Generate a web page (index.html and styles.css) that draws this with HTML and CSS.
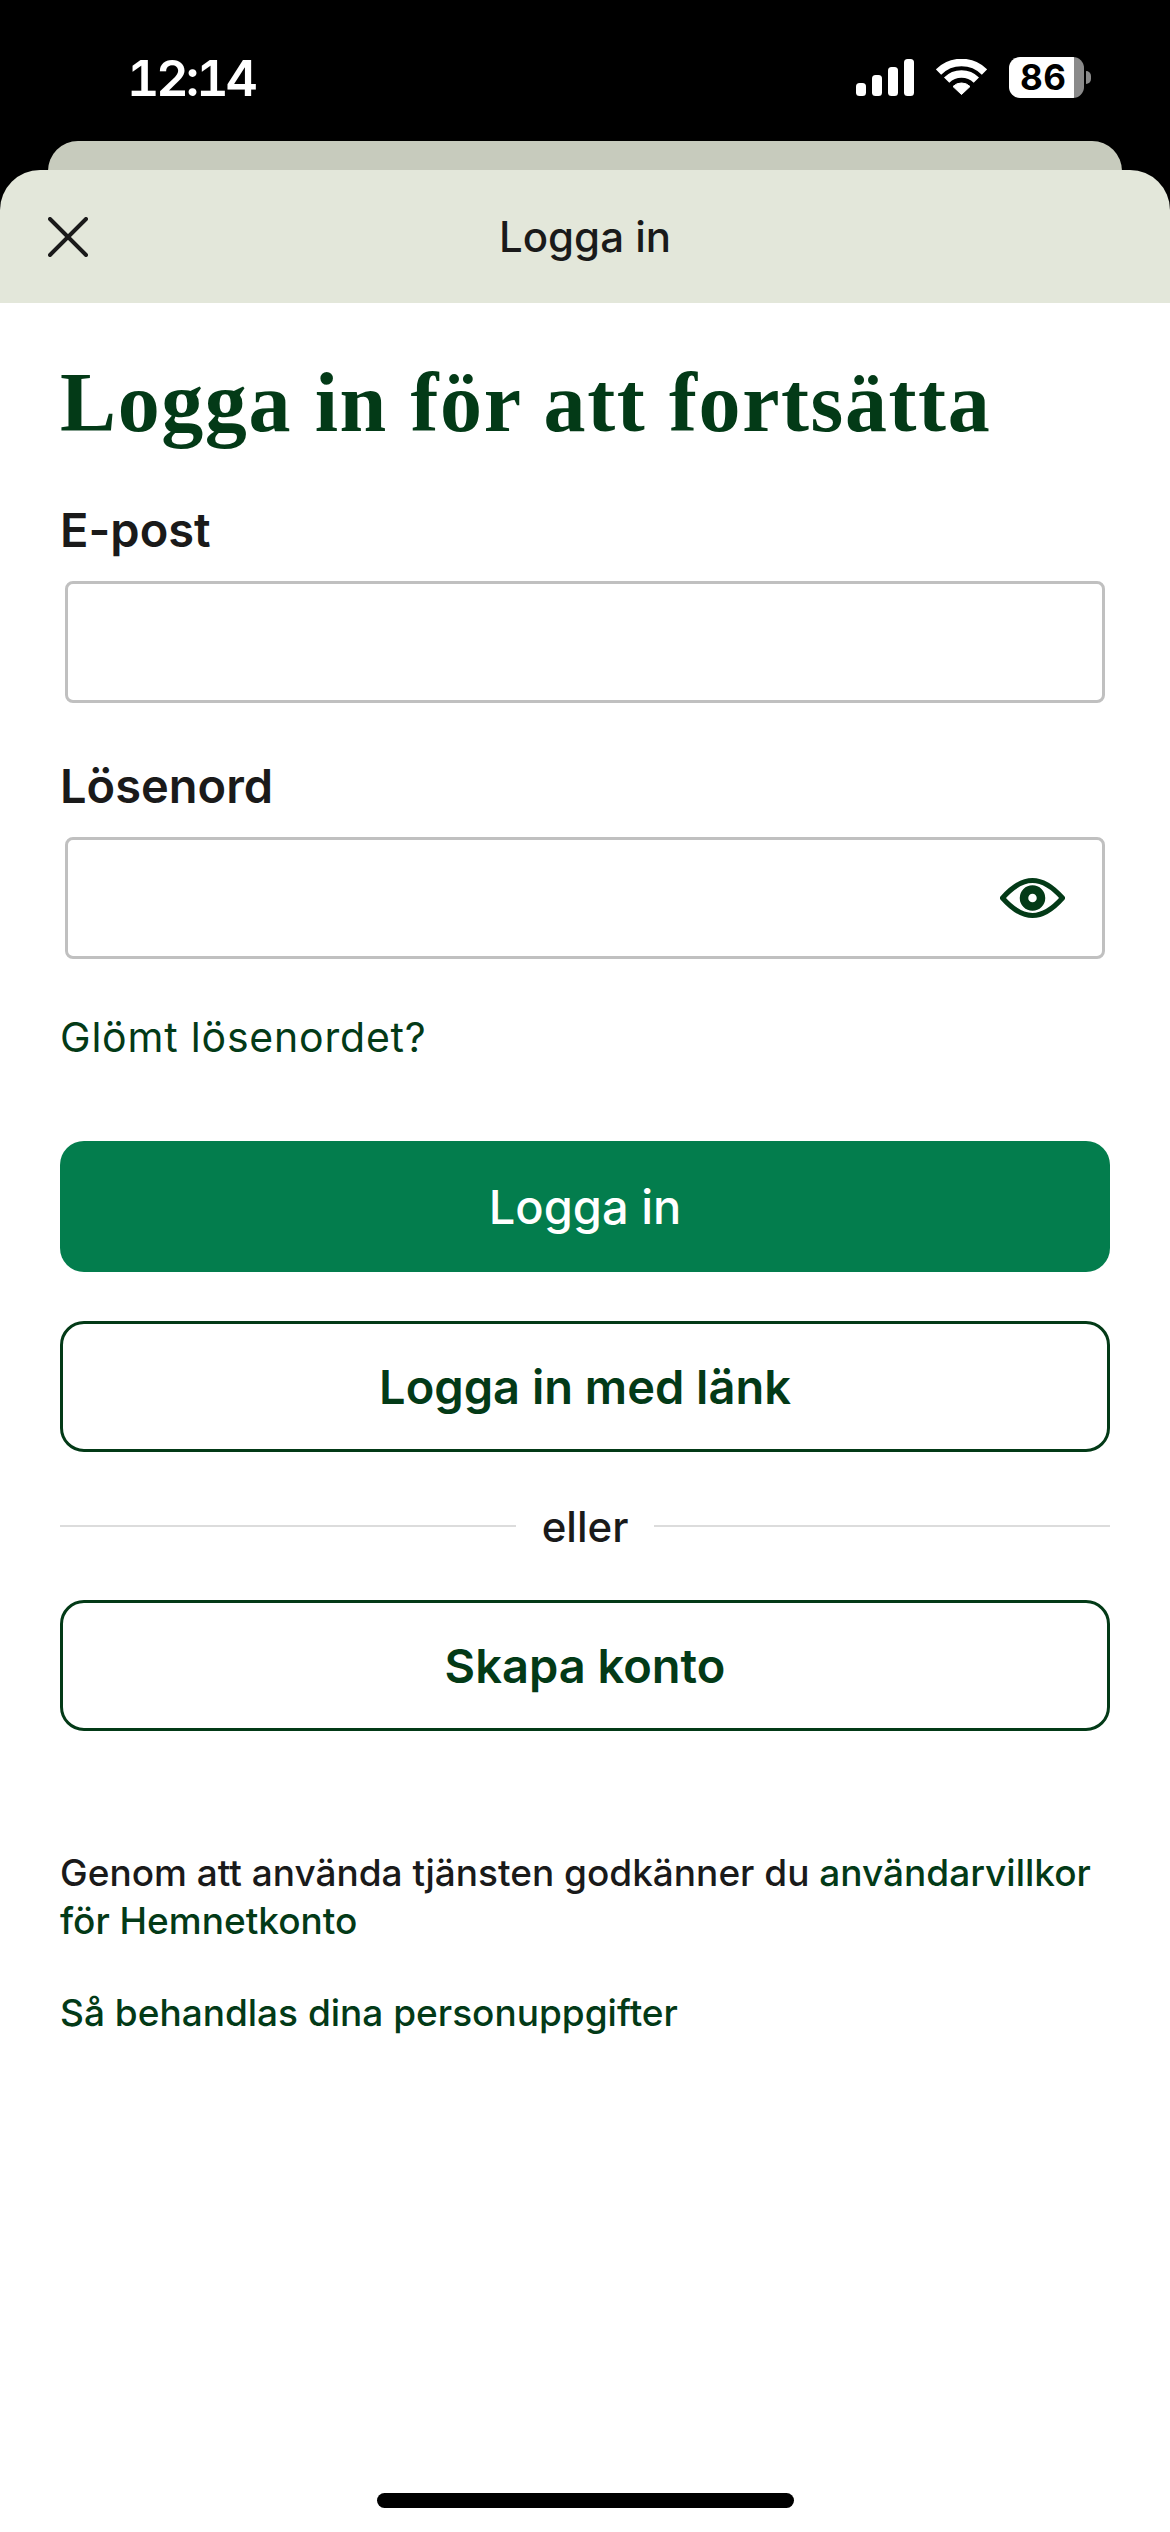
FILE: index.html
```html
<!DOCTYPE html>
<html lang="sv">
<head>
<meta charset="utf-8">
<title>Logga in</title>
<link rel="stylesheet" href="styles.css">
</head>
<body>
<div class="statusbar">
  <span class="time">12:14</span>
  <div class="status-icons">
    <svg class="signal" width="58" height="37" viewBox="0 0 58 37"><rect x="0" y="24" width="10" height="13" rx="3.5"/><rect x="16" y="16" width="10" height="21" rx="3.5"/><rect x="32" y="8" width="10" height="29" rx="3.5"/><rect x="48" y="0" width="10" height="37" rx="3.5"/></svg>
    <svg class="wifi" width="51" height="37" viewBox="0 0 51 37"><path class="wifi-arc" d="M2.5 13A32.5 32.5 0 0 1 48.5 13"/><path class="wifi-arc" d="M10.65 21.15A21 21 0 0 1 40.35 21.15"/><path class="wifi-dot" d="M25.5 35.5L17 27.5A12 12 0 0 1 34 27.5Z"/></svg>
    <div class="battery"><div class="battery-body">86</div><div class="battery-cap"></div></div>
  </div>
</div>
<div class="back-sheet"></div>
<header class="sheet-head">
  <svg class="close" width="40" height="40" viewBox="0 0 40 40"><path d="M2 2L38 38M38 2L2 38"/></svg>
  <span class="sheet-title">Logga in</span>
</header>
<main class="content">
  <h1 class="heading">Logga in för att fortsätta</h1>
  <label class="label label-first" for="email">E-post</label>
  <div class="field"><input id="email" class="input" type="text"></div>
  <label class="label label-second" for="pw">Lösenord</label>
  <div class="field">
    <input id="pw" class="input" type="password">
    <svg class="eye" width="65" height="40" viewBox="0 0 65 40"><path class="eye-line" d="M2.5 20C14 7 24 2.5 32.5 2.5S51 7 62.5 20C51 33 41 37.5 32.5 37.5S14 33 2.5 20Z"/><circle class="eye-pupil" cx="32.5" cy="20" r="8.5"/></svg>
  </div>
  <a class="forgot">Glömt lösenordet?</a>
  <button class="btn btn-primary">Logga in</button>
  <button class="btn btn-outline btn-link">Logga in med länk</button>
  <div class="divider"><span class="divider-text">eller</span></div>
  <button class="btn btn-outline">Skapa konto</button>
  <p class="terms">Genom att använda tjänsten godkänner du <a class="link">användarvillkor för Hemnetkonto</a></p>
  <p class="privacy"><a class="link">Så behandlas dina personuppgifter</a></p>
</main>
<div class="home-wrap"><div class="home-indicator"></div></div>
</body>
</html>
```
FILE: styles.css
```css
* { box-sizing: border-box; }
html, body { margin: 0; padding: 0; }
body {
  width: 1170px;
  height: 2532px;
  background: #000;
  font-family: Inter, "Liberation Sans", sans-serif;
  color: #1a1a1a;
  display: flex;
  flex-direction: column;
  overflow: hidden;
}
.statusbar {
  height: 141px;
  padding: 57px 79px 0 127px;
  display: flex;
  justify-content: space-between;
  align-items: flex-start;
  color: #fff;
}
.time { font-size: 50px; font-weight: 600; line-height: 42px; font-feature-settings: "tnum"; letter-spacing: -3px; }
.status-icons { display: flex; align-items: flex-start; }
.signal { fill: #fff; margin: 2px 22px 0 0; }
.wifi { margin: 2px 22px 0 0; }
.wifi-arc { fill: none; stroke: #fff; stroke-width: 7.5; }
.wifi-dot { fill: #fff; stroke: #fff; stroke-width: 1; stroke-linejoin: round; }
.battery { display: flex; align-items: center; }
.battery-body {
  width: 75px;
  height: 41px;
  border-radius: 11px;
  background: linear-gradient(90deg, #fff 0 65px, #8a8a8a 65px);
  color: #000;
  font-size: 35px;
  font-weight: 700;
  line-height: 41px;
  padding-left: 11px;
  letter-spacing: .5px;
}
.battery-cap { width: 5px; height: 13px; margin-left: 2px; background: #8a8a8a; border-radius: 0 6px 6px 0; }
.back-sheet {
  height: 60px;
  margin: 0 48px -31px;
  background: #c7cbbd;
  border-radius: 30px 30px 0 0;
}
.sheet-head {
  position: relative;
  height: 133px;
  background: #e3e7da;
  border-radius: 40px 40px 0 0;
  display: flex;
  align-items: center;
  justify-content: center;
  flex: none;
}
.close { position: absolute; left: 48px; top: 47px; fill: none; stroke: #1a1a1a; stroke-width: 4; stroke-linecap: round; }
.sheet-title { font-size: 42px; font-weight: 500; }
.content {
  flex: 1;
  background: #fff;
  padding: 54px 60px 0;
  display: flex;
  flex-direction: column;
}
.heading {
  margin: 0;
  font-family: "Liberation Serif", serif;
  font-size: 84px;
  line-height: 92px;
  font-weight: 700;
  letter-spacing: 1.6px;
  color: #033a17;
  white-space: nowrap;
}
.label { display: block; font-size: 47px; font-weight: 600; line-height: 56px; }
.label-first { margin-top: 53px; }
.label-second { margin-top: 55px; }
.field { position: relative; margin: 23px 5px 0; height: 122px; }
.input {
  display: block;
  width: 100%;
  height: 100%;
  border: 3px solid #c0c0c0;
  border-radius: 8px;
  background: #fff;
  outline: 0;
}
.eye { position: absolute; right: 40px; top: 41px; }
.eye-line { fill: none; stroke: #033a17; stroke-width: 5; stroke-linejoin: round; }
.eye-pupil { fill: none; stroke: #033a17; stroke-width: 8.5; }
.forgot { margin-top: 53px; font-size: 41px; line-height: 50px; color: #033a17; letter-spacing: .8px; }
.btn {
  display: block;
  width: 100%;
  height: 131px;
  border-radius: 24px;
  font-family: inherit;
  font-size: 47px;
  font-weight: 600;
  padding: 0;
}
.btn-primary { margin-top: 79px; background: #037d4d; border: 0; color: #fff; font-weight: 500; }
.btn-outline { background: #fff; border: 3px solid #033a17; color: #033a17; }
.btn-link { margin-top: 49px; }
.divider { display: flex; align-items: center; gap: 26px; height: 148px; }
.divider::before, .divider::after { content: ""; flex: 1; height: 2px; background: #dcdcdc; }
.divider-text { font-size: 42px; font-weight: 500; }
.terms, .privacy { margin: 0; font-size: 37px; font-weight: 500; line-height: 48px; }
.terms { margin-top: 118px; }
.privacy { margin-top: 44px; }
.link { color: #033a17; }
.home-wrap { background: #fff; height: 48px; flex: none; padding: 9px 0 0 377px; }
.home-indicator { width: 417px; height: 15px; border-radius: 8px; background: #000; }
```
